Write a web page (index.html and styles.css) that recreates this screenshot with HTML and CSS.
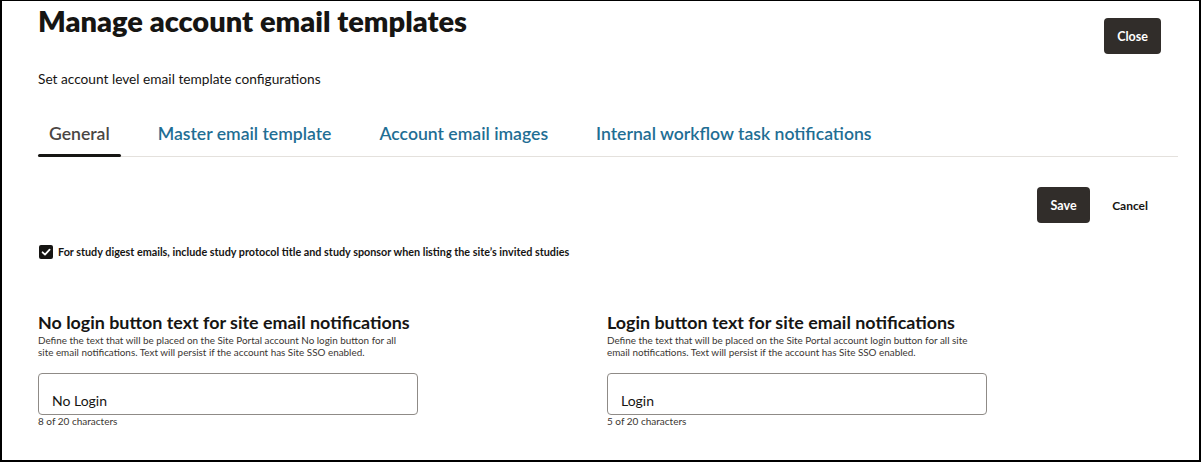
FILE: index.html
```html
<!DOCTYPE html>
<html lang="en">
<head>
<meta charset="utf-8">
<title>Manage account email templates</title>
<link rel="stylesheet" href="styles.css">
</head>
<body>
<div class="frame">
  <header class="page-head">
    <div class="head-text">
      <h1 class="page-title">Manage account email templates</h1>
      <p class="page-subtitle">Set account level email template configurations</p>
    </div>
    <button class="btn btn-primary btn-close" type="button">Close</button>
  </header>

  <nav class="tabs">
    <a class="tab tab-active" href="#">General</a>
    <a class="tab" href="#">Master email template</a>
    <a class="tab" href="#">Account email images</a>
    <a class="tab" href="#">Internal workflow task notifications</a>
  </nav>

  <div class="toolbar">
    <button class="btn btn-primary" type="button">Save</button>
    <button class="btn btn-ghost" type="button">Cancel</button>
  </div>

  <label class="check-row">
    <span class="check-box">
      <svg viewBox="0 0 14 14" width="14" height="14" aria-hidden="true"><path d="M3.6 7.3 L6 9.6 L10.6 4.6" fill="none" stroke="#fff" stroke-width="1.8" stroke-linecap="round" stroke-linejoin="round"/></svg>
    </span>
    <span class="check-label">For study digest emails, include study protocol title and study sponsor when listing the site’s invited studies</span>
  </label>

  <div class="fields">
    <section class="field">
      <h2 class="field-title">No login button text for site email notifications</h2>
      <p class="field-desc">Define the text that will be placed on the Site Portal account No login button for all<br>site email notifications. Text will persist if the account has Site SSO enabled.</p>
      <div class="input-box"><input class="text-input" type="text" value="No Login"></div>
      <div class="counter">8 of 20 characters</div>
    </section>
    <section class="field">
      <h2 class="field-title">Login button text for site email notifications</h2>
      <p class="field-desc">Define the text that will be placed on the Site Portal account login button for all site<br>email notifications. Text will persist if the account has Site SSO enabled.</p>
      <div class="input-box"><input class="text-input" type="text" value="Login"></div>
      <div class="counter">5 of 20 characters</div>
    </section>
  </div>
</div>
</body>
</html>
```

FILE: styles.css
```css
* { box-sizing: border-box; }
html, body { margin: 0; padding: 0; background: #fff; }
body {
  font-family: Lato, "Liberation Sans", sans-serif;
  color: #161513;
}
.frame {
  width: 1201px;
  height: 462px;
  border-style: solid;
  border-color: #000;
  border-width: 1px 2px 2px 2px;
  padding: 3px 21px 0 36px;
  overflow: hidden;
}
.page-head {
  display: flex;
  justify-content: space-between;
  align-items: flex-start;
}
.page-title {
  margin: 0;
  font-size: 29px;
  line-height: 34px;
  font-weight: 800;
  color: #161513;
}
.page-subtitle {
  margin: 32px 0 0;
  font-size: 13.7px;
  line-height: 18px;
  color: #161513;
}
.btn {
  font-family: inherit;
  font-size: 12.5px;
  font-weight: 700;
  height: 36px;
  border-radius: 4px;
  border: none;
  cursor: pointer;
}
.btn-primary {
  background: #312d2a;
  color: #fff;
  padding: 0 12px;
}
.btn-ghost {
  background: transparent;
  color: #161513;
  padding: 0 12px;
}
.toolbar .btn-ghost { font-size: 12px; }
.btn-close {
  margin-top: 14px;
  margin-right: 17px;
  width: 57px;
}
.tabs {
  display: flex;
  gap: 26px;
  margin-top: 24px;
  border-bottom: 1px solid #e4e1dd;
}
.tab {
  position: relative;
  padding: 12px 11px;
  font-size: 17.6px;
  line-height: 20px;
  font-weight: 600;
  color: #1f6e94;
  text-decoration: none;
}
.tab-active { color: #4a4643; }
.tab-active::after {
  content: "";
  position: absolute;
  left: 0;
  right: 0;
  bottom: -1px;
  height: 3px;
  border-radius: 2px;
  background: #161513;
}
.toolbar {
  display: flex;
  justify-content: flex-end;
  gap: 10px;
  margin-top: 30px;
  margin-right: 18px;
}
.toolbar .btn-primary { width: 53px; }
.check-row {
  display: flex;
  align-items: center;
  gap: 5px;
  margin-top: 22px;
  margin-left: 1px;
}
.check-box {
  display: inline-flex;
  width: 14px;
  height: 14px;
  border-radius: 2px;
  background: #161513;
}
.check-label {
  font-size: 10.8px;
  line-height: 14px;
  font-weight: 700;
  color: #161513;
}
.fields {
  display: grid;
  grid-template-columns: 569px 1fr;
  margin-top: 53px;
}
.field-title {
  margin: 0;
  font-size: 17.9px;
  line-height: 20px;
  font-weight: 700;
  color: #161513;
}
.field-desc {
  margin: 2px 0 0;
  font-size: 9.9px;
  line-height: 12px;
  color: #3a3632;
}
.input-box {
  width: 380px;
  height: 42px;
  margin-top: 15px;
  border: 1px solid #8f8b87;
  border-radius: 4px;
  padding: 17px 13px 0;
}
.text-input {
  display: block;
  width: 100%;
  border: none;
  outline: none;
  padding: 0;
  font-family: inherit;
  font-size: 14px;
  line-height: 20px;
  color: #161513;
  background: transparent;
}
.counter {
  font-size: 10px;
  line-height: 13px;
  color: #3a3632;
}
```
